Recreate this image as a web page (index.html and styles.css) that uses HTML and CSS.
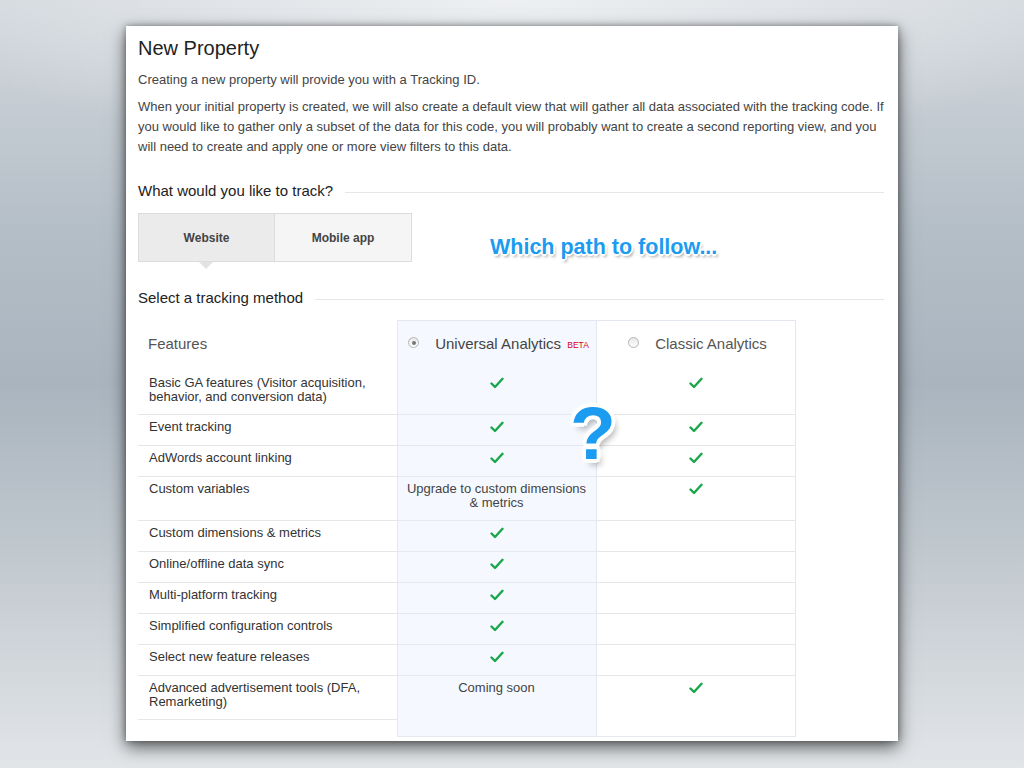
FILE: index.html
```html
<!DOCTYPE html>
<html lang="en">
<head>
    <meta charset="UTF-8">
    <title>New Property</title>
    <link rel="stylesheet" href="styles.css">
</head>
<body>
    <div class="card">
        <h1 class="title">New Property</h1>
        <p class="lead">Creating a new property will provide you with a Tracking ID.</p>
        <p class="intro">When your initial property is created, we will also create a default view that will gather all data associated with the tracking code. If you would like to gather only a subset of the data for this code, you will probably want to create a second reporting view, and you will need to create and apply one or more view filters to this data.</p>

        <h2 class="section-title">What would you like to track?</h2>
        <div class="track-row">
            <div class="tabs">
                <button class="tab active">Website</button>
                <button class="tab">Mobile app</button>
            </div>
            <div class="path-note">Which path to follow...</div>
        </div>

        <h2 class="section-title second">Select a tracking method</h2>
        <div class="methods">
            <table class="method-table">
                <colgroup>
                    <col class="col-feature">
                    <col class="col-method">
                    <col class="col-method">
                </colgroup>
                <thead>
                    <tr>
                        <th class="feature">Features</th>
                        <th class="ua"><span class="radio checked"></span>Universal Analytics <span class="beta">BETA</span></th>
                        <th class="classic"><span class="radio"></span>Classic Analytics</th>
                    </tr>
                </thead>
                <tbody>
                    <tr class="first tall">
                        <td class="feature">Basic GA features (Visitor acquisition, behavior, and conversion data)</td>
                        <td class="ua"><svg class="check" viewBox="0 0 14 12"><path d="M1.5 6.5 L5 10 L12.5 1.8"/></svg></td>
                        <td class="classic"><svg class="check" viewBox="0 0 14 12"><path d="M1.5 6.5 L5 10 L12.5 1.8"/></svg></td>
                    </tr>
                    <tr>
                        <td class="feature">Event tracking</td>
                        <td class="ua"><svg class="check" viewBox="0 0 14 12"><path d="M1.5 6.5 L5 10 L12.5 1.8"/></svg></td>
                        <td class="classic"><svg class="check" viewBox="0 0 14 12"><path d="M1.5 6.5 L5 10 L12.5 1.8"/></svg></td>
                    </tr>
                    <tr>
                        <td class="feature">AdWords account linking</td>
                        <td class="ua"><svg class="check" viewBox="0 0 14 12"><path d="M1.5 6.5 L5 10 L12.5 1.8"/></svg></td>
                        <td class="classic"><svg class="check" viewBox="0 0 14 12"><path d="M1.5 6.5 L5 10 L12.5 1.8"/></svg></td>
                    </tr>
                    <tr class="tall">
                        <td class="feature">Custom variables</td>
                        <td class="ua">Upgrade to custom dimensions &amp; metrics</td>
                        <td class="classic"><svg class="check" viewBox="0 0 14 12"><path d="M1.5 6.5 L5 10 L12.5 1.8"/></svg></td>
                    </tr>
                    <tr>
                        <td class="feature">Custom dimensions &amp; metrics</td>
                        <td class="ua"><svg class="check" viewBox="0 0 14 12"><path d="M1.5 6.5 L5 10 L12.5 1.8"/></svg></td>
                        <td class="classic"></td>
                    </tr>
                    <tr>
                        <td class="feature">Online/offline data sync</td>
                        <td class="ua"><svg class="check" viewBox="0 0 14 12"><path d="M1.5 6.5 L5 10 L12.5 1.8"/></svg></td>
                        <td class="classic"></td>
                    </tr>
                    <tr>
                        <td class="feature">Multi-platform tracking</td>
                        <td class="ua"><svg class="check" viewBox="0 0 14 12"><path d="M1.5 6.5 L5 10 L12.5 1.8"/></svg></td>
                        <td class="classic"></td>
                    </tr>
                    <tr>
                        <td class="feature">Simplified configuration controls</td>
                        <td class="ua"><svg class="check" viewBox="0 0 14 12"><path d="M1.5 6.5 L5 10 L12.5 1.8"/></svg></td>
                        <td class="classic"></td>
                    </tr>
                    <tr>
                        <td class="feature">Select new feature releases</td>
                        <td class="ua"><svg class="check" viewBox="0 0 14 12"><path d="M1.5 6.5 L5 10 L12.5 1.8"/></svg></td>
                        <td class="classic"></td>
                    </tr>
                    <tr class="tall">
                        <td class="feature">Advanced advertisement tools (DFA, Remarketing)</td>
                        <td class="ua">Coming soon</td>
                        <td class="classic"><svg class="check" viewBox="0 0 14 12"><path d="M1.5 6.5 L5 10 L12.5 1.8"/></svg></td>
                    </tr>
                    <tr class="spacer">
                        <td class="feature"></td>
                        <td class="ua"></td>
                        <td class="classic"></td>
                    </tr>
                </tbody>
            </table>
            <span class="question">?</span>
        </div>
    </div>
</body>
</html>
```

FILE: styles.css
```css
/* Fondo general */
body {
    margin: 0;
    min-height: 768px;
    padding-top: 26px;
    box-sizing: border-box;
    display: flex;
    justify-content: center;
    align-items: flex-start;
    font-family: 'Liberation Sans', Arial, Helvetica, sans-serif;
    background:
        radial-gradient(ellipse 60% 20% at 50% 0%, rgba(240, 242, 244, 0.9), rgba(240, 242, 244, 0)),
        linear-gradient(to bottom, #d3d8dd 0%, #b4bec7 30%, #a9b4be 50%, #c4cbd1 75%, #e2e5e8 100%);
}

.card {
    width: 772px;
    height: 715px;
    box-sizing: border-box;
    padding: 10px 14px 0 12px;
    background: #fff;
    box-shadow: 0 6px 16px rgba(0, 0, 0, 0.6), 0 0 6px rgba(0, 0, 0, 0.35);
}

.title {
    margin: 0;
    font-size: 20px;
    line-height: 24px;
    font-weight: normal;
    color: #222;
}

.lead, .intro {
    font-size: 13px;
    line-height: 20px;
    color: #444;
}

.lead {
    margin: 10px 0 0;
}

.intro {
    margin: 7px 0 0;
}

.section-title {
    display: flex;
    align-items: center;
    margin: 24px 0 0;
    font-size: 15px;
    line-height: 20px;
    font-weight: normal;
    color: #222;
}

.section-title::after {
    content: "";
    flex: 1;
    height: 1px;
    margin: 3px 0 0 12px;
    background: #e6e6e6;
}

.section-title.second {
    margin-top: 26px;
}

/* Pestañas */
.track-row {
    display: flex;
    align-items: flex-start;
    margin-top: 12px;
}

.tabs {
    display: flex;
    border: 1px solid #dcdcdc;
}

.tab {
    position: relative;
    width: 136px;
    height: 47px;
    margin: 0;
    padding: 1px 0 0;
    border: none;
    background: #f5f5f5;
    font-family: inherit;
    font-size: 12px;
    font-weight: bold;
    color: #444;
}

.tab.active {
    background: #ebebeb;
    border-right: 1px solid #dcdcdc;
}

.tab.active::after {
    content: "";
    position: absolute;
    left: 60px;
    bottom: -8px;
    border-left: 7px solid transparent;
    border-right: 7px solid transparent;
    border-top: 7px solid #e2e2e2;
}

.path-note {
    margin: 22px 0 0 78px;
    font-size: 21.5px;
    line-height: 24px;
    font-weight: bold;
    color: #1c9cf0;
    text-shadow:
        1px 1px 0 #fff, -1px -1px 0 #fff, 1px -1px 0 #fff, -1px 1px 0 #fff,
        2px 0 0 #fff, -2px 0 0 #fff, 0 2px 0 #fff, 0 -2px 0 #fff,
        2px 3px 3px rgba(0, 0, 0, 0.35);
}

/* Tabla de métodos */
.methods {
    position: relative;
    margin-top: 12px;
}

.method-table {
    width: 657px;
    table-layout: fixed;
    border-collapse: collapse;
    font-size: 13px;
    color: #333;
}

.col-feature { width: 259px; }
.col-method { width: 199px; }

.method-table th {
    padding: 14px 0 18px;
    font-size: 15px;
    line-height: 18px;
    font-weight: normal;
    color: #555;
    text-align: center;
    vertical-align: top;
}

.method-table th.feature {
    padding-left: 10px;
    text-align: left;
}

.method-table th.ua,
.method-table th.classic {
    border-top: 1px solid #e3e8f0;
    padding-left: 4px;
}

.method-table td {
    padding: 5px 10px 11px 11px;
    line-height: 14px;
    vertical-align: top;
    border-top: 1px solid #e6e6e6;
}

.method-table tr.tall td {
    padding-bottom: 10px;
}

.method-table tr.first td {
    border-top: none;
    padding-top: 5px;
}

.method-table td.ua,
.method-table td.classic {
    text-align: center;
    padding-left: 4px;
    padding-right: 4px;
}

.method-table .ua {
    background: #f5f9ff;
    border-left: 1px solid #e3e9f4;
    border-right: 1px solid #e3e9f4;
    color: #444;
}

.method-table .classic {
    border-right: 1px solid #e6e6e6;
}

.method-table td.ua {
    border-top-color: #e4e8ef;
}

.method-table tr.spacer td {
    height: 16px;
    padding: 0;
}

.method-table tr.spacer td.ua,
.method-table tr.spacer td.classic {
    border-top: none;
    border-bottom: 1px solid #e6e9ee;
}

.radio {
    display: inline-block;
    width: 9px;
    height: 9px;
    margin-right: 16px;
    vertical-align: 1px;
    border: 1px solid #b5b5b5;
    border-radius: 50%;
    background: linear-gradient(#e8e8e8, #fdfdfd);
    box-sizing: content-box;
    position: relative;
}

.radio.checked::after {
    content: "";
    position: absolute;
    left: 2.5px;
    top: 2.5px;
    width: 4px;
    height: 4px;
    border-radius: 50%;
    background: #777;
}

.beta {
    font-size: 8.5px;
    line-height: 1;
    color: #d0021b;
    vertical-align: 1px;
    margin-left: 2px;
}

.check {
    width: 14px;
    height: 12px;
    vertical-align: top;
    margin-top: 1px;
}

.check path {
    fill: none;
    stroke: #1aa64b;
    stroke-width: 2.4;
    stroke-linecap: round;
    stroke-linejoin: round;
}

.question {
    position: absolute;
    left: 432px;
    top: 76px;
    font-size: 75px;
    line-height: 1;
    font-weight: bold;
    color: #1c9cf0;
    text-shadow:
        4px 0 0 #fff, -4px 0 0 #fff, 0 4px 0 #fff, 0 -4px 0 #fff,
        3px 3px 0 #fff, -3px -3px 0 #fff, 3px -3px 0 #fff, -3px 3px 0 #fff,
        4px 6px 6px rgba(0, 0, 0, 0.3);
}
```
